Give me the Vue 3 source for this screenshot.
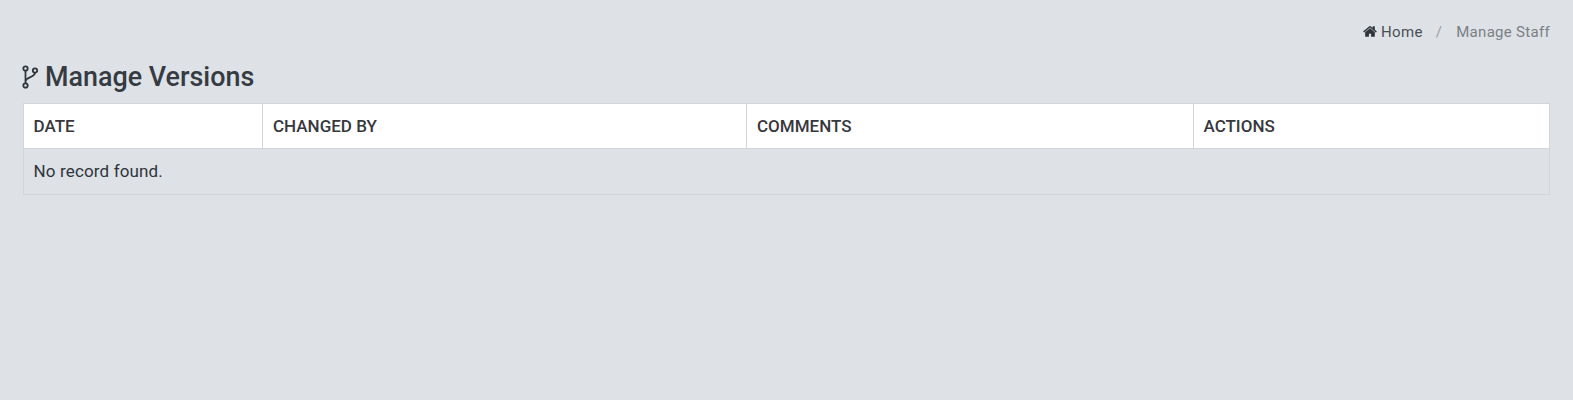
<script setup>
const columns = [
  { label: "Date", width: "239px" },
  { label: "Changed By", width: "484px" },
  { label: "Comments", width: "447px" },
  { label: "Actions", width: "auto" },
];
</script>

<template>
  <div class="page">
    <ol class="breadcrumb">
      <li class="crumb">
        <svg class="home-icon" viewBox="0 0 1664 1792" aria-hidden="true">
          <path d="M1408 992v480q0 26-19 45t-45 19H960v-384H704v384H320q-26 0-45-19t-19-45V992q0-1 .5-3t.5-3l575-474 575 474q1 2 1 6zm223-69l-62 74q-8 9-21 11h-3q-13 0-21-7L832 424l-692 577q-12 8-24 7-13-2-21-11l-62-74q-8-10-7-23.500t11-21.500l719-599q32-26 76-26t76 26l244 204V288q0-14 9-23t23-9h192q14 0 23 9t9 23v408l219 182q10 8 11 21.500t-7 23.500z" />
        </svg>
        <span>Home</span>
      </li>
      <li class="separator">/</li>
      <li class="current">Manage Staff</li>
    </ol>

    <h1 class="title">
      <svg class="branch-icon" viewBox="0 0 16 24" aria-hidden="true">
        <circle cx="3.500" cy="3.500" r="2.200" />
        <circle cx="3.500" cy="20.500" r="2.200" />
        <circle cx="13" cy="5.500" r="2.200" />
        <path d="M3.500 5.700v12.600M13 7.700c0 4.800-9.500 4-9.500 9" />
      </svg>
      <span>Manage Versions</span>
    </h1>

    <table class="versions">
      <thead>
        <tr>
          <th v-for="col in columns" :key="col.label" :style="{ width: col.width }">
            {{ col.label }}
          </th>
        </tr>
      </thead>
      <tbody>
        <tr>
          <td :colspan="columns.length">No record found.</td>
        </tr>
      </tbody>
    </table>
  </div>
</template>

<style>
body {
  background: #dee1e6;
}
</style>

<style scoped>
.page {
  box-sizing: border-box;
  height: 400px;
  padding: 22px 23px 0 23px;
  font-family: Roboto, "Liberation Sans", sans-serif;
  font-size: 17px;
  color: #2f353b;
  overflow: hidden;
}

.breadcrumb {
  display: flex;
  justify-content: flex-end;
  align-items: center;
  gap: 14px;
  list-style: none;
  margin: 0;
  padding: 0;
  height: 19px;
  font-size: 15px;
  letter-spacing: 0.3px;
}

.crumb {
  display: flex;
  align-items: center;
  gap: 4px;
  margin-right: -1px;
  color: #4a4f55;
}

.home-icon {
  width: 14px;
  height: 15px;
  fill: #2f353b;
}

.separator {
  color: #9a9ea3;
}

.current {
  color: #7b7f84;
}

.title {
  display: flex;
  align-items: center;
  gap: 7px;
  margin: 20px 0 10px -1px;
  font-size: 26.900px;
  font-weight: 500;
  line-height: 33px;
  height: 32px;
  color: #353b42;
}

.branch-icon {
  width: 16px;
  height: 24px;
  fill: none;
  stroke: #2f353b;
  stroke-width: 1.800;
}

.versions {
  width: 100%;
  border-collapse: collapse;
  table-layout: fixed;
}

th,
td {
  border: 1px solid #d3d5d8;
  padding: 0 10px;
  text-align: left;
  height: 45px;
  box-sizing: border-box;
}

th:first-child,
th:last-child,
td {
  padding-left: 9.500px;
}

td {
  height: 46px;
  padding-bottom: 2px;
  letter-spacing: 0.15px;
}

th {
  background: #fff;
  font-weight: 500;
  text-transform: uppercase;
  color: #36383c;
}
</style>
